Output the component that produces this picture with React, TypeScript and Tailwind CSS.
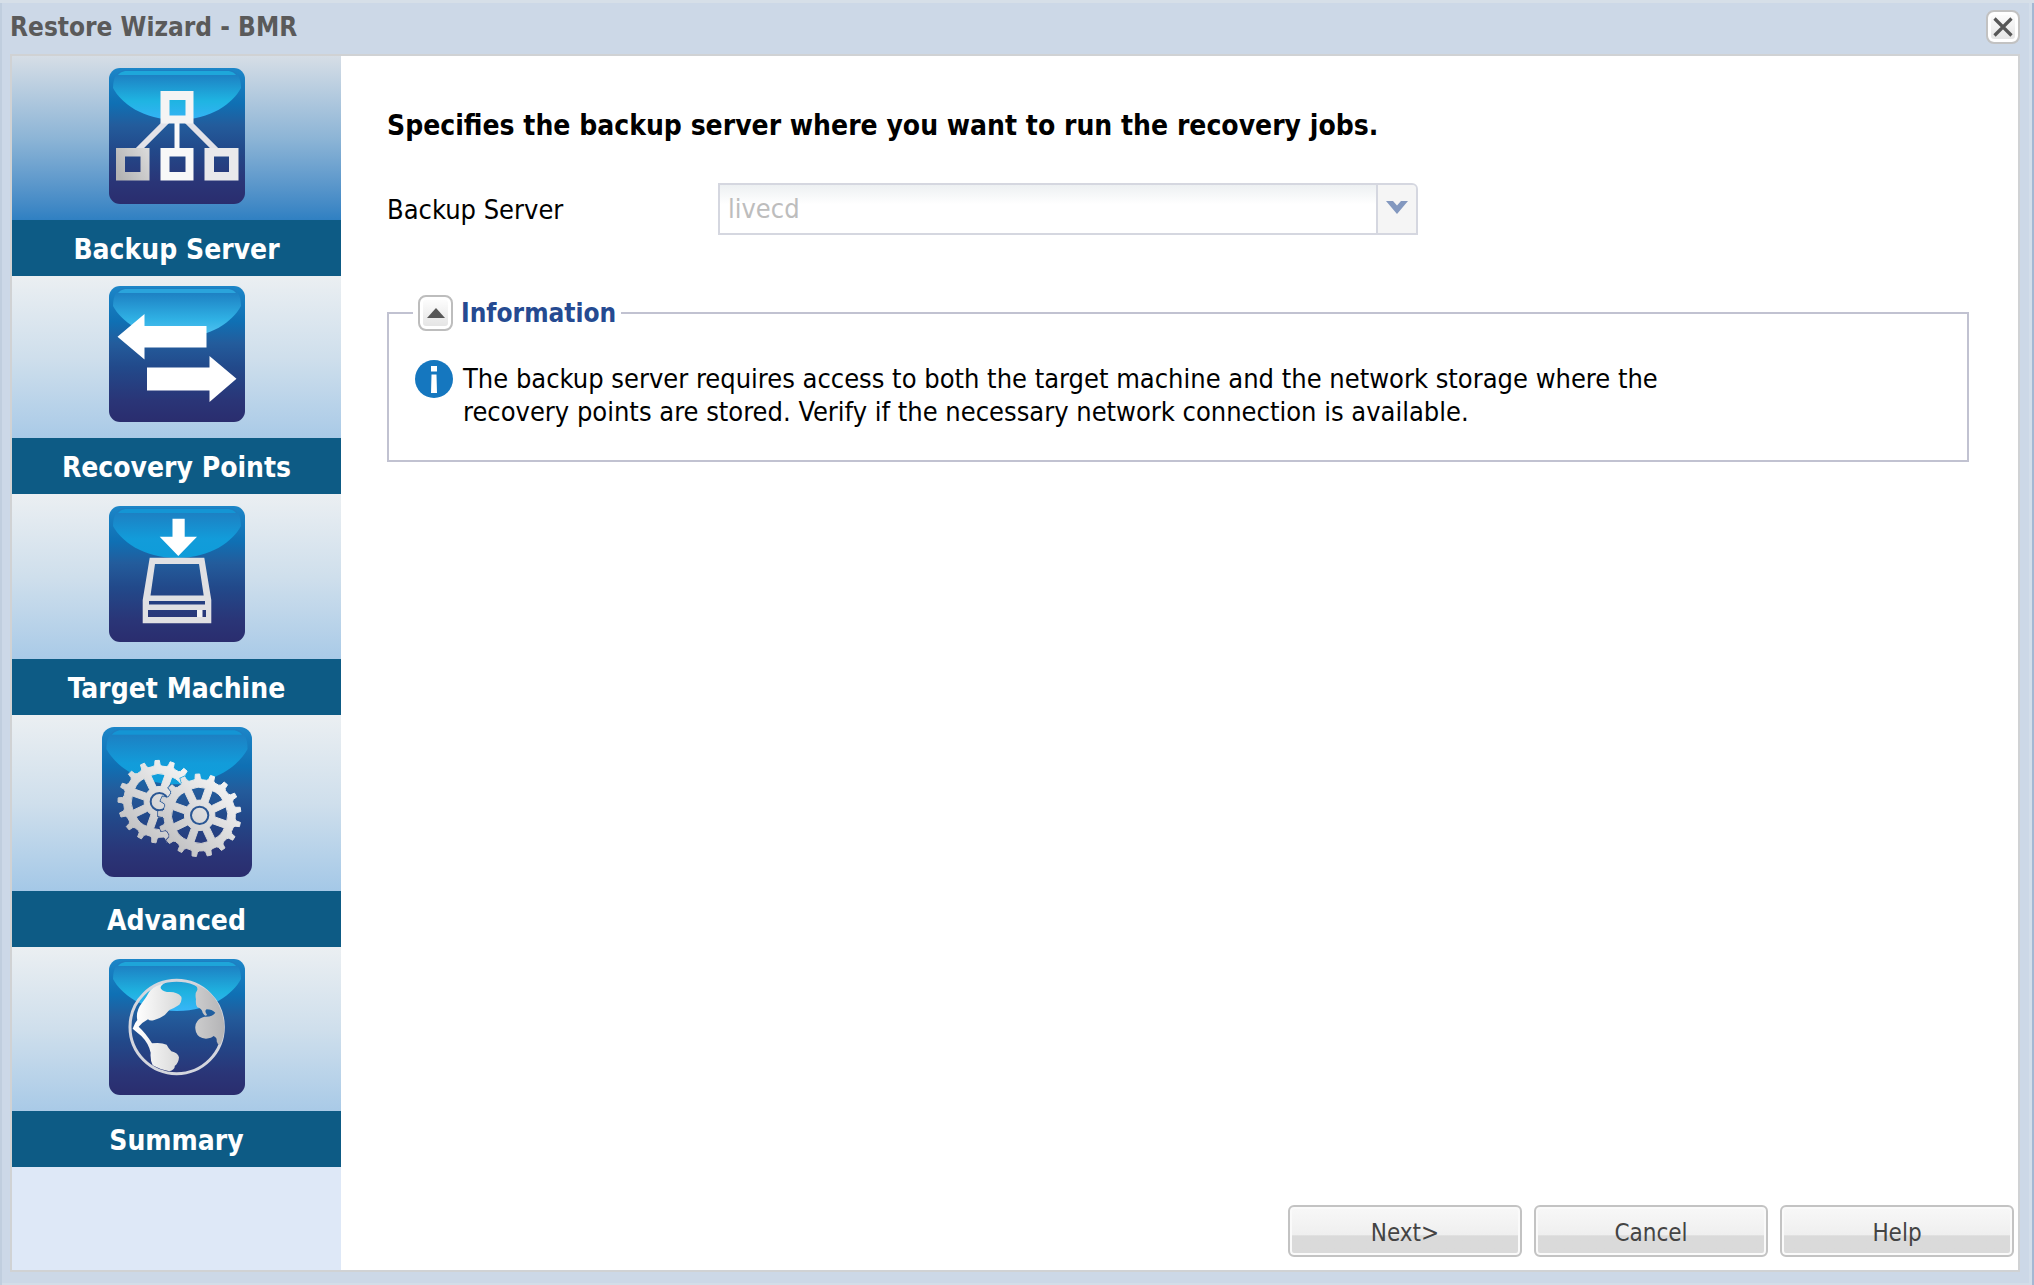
import React, { useId, type ReactNode } from "react";

/* Rounded, glossy tile that every step icon is drawn on. */
function Tile({ size, glow, children }: { size: number; glow: [string, string]; children: (fill: string) => ReactNode }) {
  const id = useId();
  return (
    <svg width={size} height={size} viewBox="0 0 136 136" aria-hidden="true" className="block">
      <defs>
        <linearGradient id={`${id}b`} x1="0" y1="0" x2="0" y2="1">
          <stop offset="0" stopColor="#1c86c8" />
          <stop offset="0.26" stopColor="#0f70b4" />
          <stop offset="0.42" stopColor="#235c9c" />
          <stop offset="0.6" stopColor="#22498a" />
          <stop offset="0.84" stopColor="#2a3577" />
          <stop offset="1" stopColor="#2a2d6e" />
        </linearGradient>
        <linearGradient id={`${id}g`} x1="0" y1="0" x2="0" y2="1">
          <stop offset="0.08" stopColor="#1d7fc2" />
          <stop offset="0.62" stopColor={glow[0]} />
          <stop offset="1" stopColor={glow[1]} />
        </linearGradient>
        <linearGradient id={`${id}m`} gradientUnits="userSpaceOnUse" x1="6" y1="100" x2="80" y2="60">
          <stop offset="0" stopColor="#b4b4b4" />
          <stop offset="0.5" stopColor="#dedede" />
          <stop offset="1" stopColor="#fafafa" />
        </linearGradient>
      </defs>
      <rect width="136" height="136" rx="11" fill={`url(#${id}b)`} />
      <path d="M14 2H122Q132 5 132 20C124 35 102 52 68 52S12 35 4 20Q4 5 14 2Z" fill={`url(#${id}g)`} />
      <path d="M16 3H120Q125 4 127 7H9Q11 4 16 3Z" fill={glow[0]} opacity="0.75" />
      {children(`url(#${id}m)`)}
    </svg>
  );
}

function ServerIcon() {
  return (
    <Tile size={136} glow={["#1fb4e2", "#35b3f6"]}>
      {(fill) => (
        <>
          <path d="M58 53L29 82M78 53L107 82" stroke="#e2e2e8" strokeWidth="6" />
          <path d="M68 54V82" stroke="#fafafa" strokeWidth="5" />
          <g fillRule="evenodd">
            <path fill="#f4f4f4" d="M51.500 23H84.500V55.500H51.500ZM60.500 32V47.500H76.500V32Z" />
            <path fill={fill} d="M7 80H40.500V112.500H7ZM16 88.500V104H31.500V88.500Z" />
            <path fill="#f8f8f8" d="M51.500 80H84.500V112.500H51.500ZM60.500 88.500V104H76.500V88.500Z" />
            <path fill="#e9e9eb" d="M95.500 80H129.500V112.500H95.500ZM105 88.500V104H120V88.500Z" />
          </g>
        </>
      )}
    </Tile>
  );
}

function ArrowsIcon() {
  return (
    <Tile size={136} glow={["#2fb0e4", "#58c6f4"]}>
      {() => (
        <g fill="#fff">
          <path d="M8.500 50.700L35.500 28V40H97.500V61.500H35.500V73.500Z" />
          <path d="M127.500 92.700L100.500 70V81.500H38V104.500H100.500V116Z" />
        </g>
      )}
    </Tile>
  );
}

function DriveIcon() {
  return (
    <Tile size={136} glow={["#129cda", "#0f9cd9"]}>
      {() => (
        <>
          <path d="M63.500 12.700H75.700V30.700H88L69.300 50L50.700 30.700H63.500Z" fill="#fff" />
          <path
            d="M40.700 51.700H95.300L102.300 94V117.300H33.700V94ZM46 58L41.500 89.500H94.700L90 58ZM40 95V98.500H96V95ZM39 104V111H97V104Z"
            fill="#e0e0e3"
            fillRule="evenodd"
          />
          <rect x="88" y="104" width="5.500" height="7" fill="#f2f2f4" />
        </>
      )}
    </Tile>
  );
}

const TEETH = 17;
const polar = (r: number, deg: number) => {
  const a = (deg * Math.PI) / 180;
  return `${(r * Math.sin(a)).toFixed(1)} ${(-r * Math.cos(a)).toFixed(1)}`;
};
const gearOutline =
  "M" +
  Array.from({ length: TEETH }, (_, i) => {
    const c = (i * 360) / TEETH - 3;
    return [polar(107, c - 7), polar(111, c - 4.2), polar(124, c - 3), polar(124, c + 3), polar(111, c + 4.2), polar(107, c + 7)].join("L");
  }).join("L") +
  "Z";
const gearHoles = Array.from({ length: 8 }, (_, i) => {
  const c = i * 45 - 3;
  return `M${polar(46, c - 9)}L${polar(83, c - 15)}Q${polar(89, c)} ${polar(83, c + 15)}L${polar(46, c + 9)}Z`;
}).join("");

function GearsIcon() {
  const id = useId();
  return (
    <Tile size={150} glow={["#129cda", "#0f9fdc"]}>
      {() => (
        <g transform="scale(0.3022) translate(-10 -10)">
          <defs>
            <linearGradient id={`${id}f`} x1="0" y1="1" x2="0.9" y2="0">
              <stop offset="0" stopColor="#b8b8ba" />
              <stop offset="1" stopColor="#fafafa" />
            </linearGradient>
            <mask id={`${id}k`} maskUnits="userSpaceOnUse" x="0" y="0" width="470" height="470">
              <rect width="470" height="470" fill="#fff" />
              <path d={gearOutline} transform="translate(303 275)" fill="#000" stroke="#000" strokeWidth="7" />
            </mask>
          </defs>
          {[
            { x: 182, y: 234, mask: `url(#${id}k)` },
            { x: 303, y: 275, mask: undefined },
          ].map((g) => (
            <g key={g.x} mask={g.mask}>
              <g transform={`translate(${g.x} ${g.y})`}>
                <path d={gearOutline + gearHoles} fill={`url(#${id}f)`} fillRule="evenodd" stroke={`url(#${id}f)`} strokeWidth="3" strokeLinejoin="round" />
                <circle r="26" fill="none" stroke="#2b5794" strokeWidth="6" />
              </g>
            </g>
          ))}
        </g>
      )}
    </Tile>
  );
}

function GlobeIcon() {
  const id = useId();
  return (
    <Tile size={136} glow={["#1fb2e0", "#38b6f8"]}>
      {() => (
        <g transform="translate(-3 -3) scale(0.3333)">
          <defs>
            <linearGradient id={`${id}w`} gradientUnits="userSpaceOnUse" x1="90" y1="0" x2="355" y2="0">
              <stop offset="0" stopColor="#fff" />
              <stop offset="0.45" stopColor="#dcdcdc" />
              <stop offset="1" stopColor="#b4b4b6" />
            </linearGradient>
          </defs>
          <circle cx="212" cy="213" r="140" fill="none" stroke="#d4d6de" strokeWidth="9" />
          <g fill={`url(#${id}w)`}>
            <path d="M80 218Q86 200 94 192Q88 165 110 138Q122 122 128 110Q134 96 165 84L178 80Q160 90 165 98Q172 108 192 108Q214 108 226 122Q229 134 220 146Q205 156 190 162Q175 184 145 192Q132 196 126 190Q108 200 98 212Q120 232 138 262Q165 258 182 266Q188 278 196 286Q216 290 219 304Q218 322 206 330Q208 340 190 346Q164 342 140 328Q132 312 134 290Q128 262 106 240Q92 228 80 218Z" />
            <path d="M262 84Q276 90 274 102Q266 112 270 130Q268 146 274 154Q288 158 290 170Q298 184 303 176Q294 164 302 160Q318 160 328 170Q318 184 296 182Q280 186 274 196Q264 208 270 228Q276 246 300 248Q318 246 322 240Q334 244 332 256Q336 270 344 264Q355 240 355 213Q352 150 310 108Q288 90 262 84Z" />
          </g>
        </g>
      )}
    </Tile>
  );
}

const steps = [
  { label: "Backup Server", icon: <ServerIcon />, area: "h-[164px] pt-3 from-[#d6dee6] via-[#8db5d6] to-[#2f80c2]" },
  { label: "Recovery Points", icon: <ArrowsIcon />, area: "h-[162px] pt-[10px] from-[#ebeff2] via-[#cfdfec] to-[#a9cae7]" },
  { label: "Target Machine", icon: <DriveIcon />, area: "h-[165px] pt-3 from-[#ebeff2] via-[#cfdfec] to-[#a9cae7]" },
  { label: "Advanced", icon: <GearsIcon />, area: "h-[176px] pt-3 from-[#ebeff2] via-[#cfdfec] to-[#a4c8e7]" },
  { label: "Summary", icon: <GlobeIcon />, area: "h-[164px] pt-3 from-[#ebeff2] via-[#cfdfec] to-[#a9cae7]" },
];

function Sidebar() {
  return (
    <nav aria-label="Wizard steps" className="flex w-[329px] shrink-0 flex-col bg-[#dee8f7]">
      {steps.map((s, i) => (
        <button key={s.label} type="button" aria-current={i === 0 ? "step" : undefined} className="flex w-full flex-col">
          <span className={`flex w-full justify-center bg-linear-to-b ${s.area}`}>{s.icon}</span>
          <span className="flex h-14 w-full items-center justify-center bg-[#0d5b85] pt-1 text-[28px] leading-8 font-bold text-white">
            {s.label}
          </span>
        </button>
      ))}
    </nav>
  );
}

function FooterButton({ children }: { children: ReactNode }) {
  return (
    <button
      type="button"
      className="flex h-[52px] w-[234px] items-center justify-center rounded-md border-2 border-[#c3c3c3] bg-linear-to-b from-[#f8f8f8] from-0% via-[#efefef] via-58% to-[#dadada] to-60% pt-1 text-2xl leading-7 text-[#444] shadow-[inset_0_0_0_2px_#fafafa]"
    >
      {children}
    </button>
  );
}

export default function App() {
  return (
    <div className="flex min-h-screen flex-col bg-[#ccd8e7] pr-[14px] pb-[13px] pl-[10px] font-['DejaVu_Sans_Condensed','DejaVu_Sans',sans-serif] text-black shadow-[inset_0_3px_0_#d6dfe8,inset_2px_0_0_#c0cede,inset_-2px_0_0_#a3b8d3,inset_-5px_0_0_#d3deea,inset_0_-2px_0_#d3dde8]">
      <header className="flex h-[54px] items-center justify-between">
        <h1 className="text-[26px] leading-8 font-bold text-[#5a5a5a]">Restore Wizard - BMR</h1>
        <button
          type="button"
          aria-label="Close"
          className="flex size-[34px] items-center justify-center rounded-lg border-2 border-[#c2c2c2] bg-linear-to-b from-white to-[#e2e2e2] shadow-[inset_0_0_0_3px_#fff]"
        >
          <svg width="22" height="22" viewBox="0 0 22 22" aria-hidden="true">
            <path d="M2.500 2.500L19.500 19.500M19.500 2.500L2.500 19.500" stroke="#575757" strokeWidth="3.200" />
          </svg>
        </button>
      </header>

      <div className="flex flex-1 border-2 border-[#d0d2d4] bg-white">
        <Sidebar />
        <main className="flex min-w-0 flex-1 flex-col">
          <div className="flex-1 pt-[52px] pr-[49px] pl-[46px]">
            <h2 className="text-[28px] leading-9 font-bold">Specifies the backup server where you want to run the recovery jobs.</h2>

            <div className="mt-[39px] flex items-center">
              <label htmlFor="server" className="w-[331px] text-[27px] leading-[33px]">
                Backup Server
              </label>
              <div className="relative w-[700px]">
                <select
                  id="server"
                  disabled
                  defaultValue="livecd"
                  className="block h-[52px] w-full appearance-none rounded-tr-md border-2 border-[#d5d7e0] bg-white bg-linear-to-b from-[#edf0f2] to-white to-40% pr-12 pl-2 text-[27px] leading-8 text-[#bdbdbd] opacity-100"
                >
                  <option value="livecd">livecd</option>
                </select>
                <span className="pointer-events-none absolute inset-y-[2px] right-[2px] flex w-[40px] items-center justify-center rounded-tr-sm border-l-2 border-[#d5d7e0] bg-[#f5f5f5] pb-1">
                  <svg width="22" height="13" viewBox="0 0 22 13" aria-hidden="true">
                    <path d="M0 0H7L11 4.500L15 0H22L11 13Z" fill="#8398bf" />
                  </svg>
                </span>
              </div>
            </div>

            <fieldset className="mt-[60px] border-2 border-[#c1c2d1]">
              <legend className="ml-6 flex items-center gap-2 px-[5px] text-[26px] leading-9 font-bold text-[#254a91]">
                <button
                  type="button"
                  aria-label="Collapse information"
                  className="flex h-9 w-[35px] items-center justify-center rounded-lg border-2 border-[#bdbdbd] bg-linear-to-b from-white to-[#e2e2e2] shadow-[inset_0_0_0_3px_#fff]"
                >
                  <svg width="18" height="10" viewBox="0 0 18 10" aria-hidden="true">
                    <path d="M9 0L18 10H0Z" fill="#575757" />
                  </svg>
                </button>
                Information
              </legend>
              <div className="flex items-start gap-[10px] pt-[31px] pb-8 pl-[26px]">
                <svg width="38" height="38" viewBox="0 0 38 38" aria-hidden="true" className="-mt-0.5 shrink-0">
                  <circle cx="19" cy="19" r="19" fill="#1577bf" />
                  <path d="M16 6H22V11.500H16ZM16.500 14.500H21.500L22 33H16Z" fill="#fff" />
                </svg>
                <p className="max-w-[1270px] text-[27px] leading-[33px]">
                  The backup server requires access to both the target machine and the network storage where the recovery points are stored. Verify if
                  the necessary network connection is available.
                </p>
              </div>
            </fieldset>
          </div>

          <footer className="flex justify-end gap-3 pr-1 pb-[13px]">
            <FooterButton>Next&gt;</FooterButton>
            <FooterButton>Cancel</FooterButton>
            <FooterButton>Help</FooterButton>
          </footer>
        </main>
      </div>
    </div>
  );
}
